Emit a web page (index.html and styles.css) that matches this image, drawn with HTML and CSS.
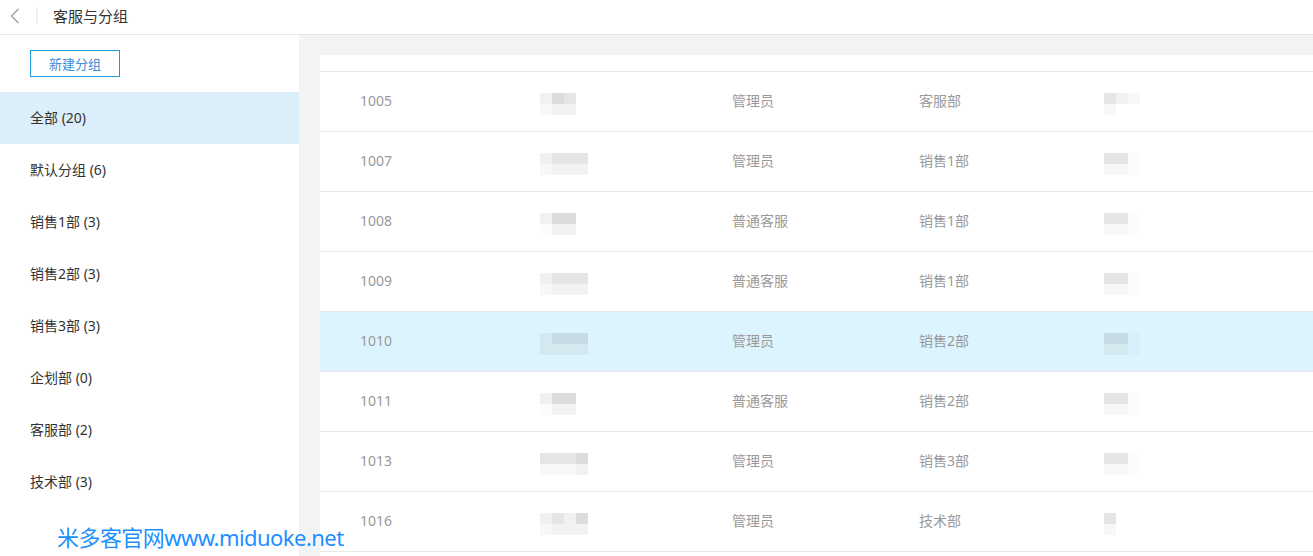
FILE: index.html
```html
<!DOCTYPE html>
<html lang="zh-CN">
  <head>
    <meta charset="UTF-8" />
    <meta name="viewport" content="width=device-width, initial-scale=1.0" />
    <title>客服与分组</title>
    <link rel="stylesheet" href="styles.css">
  </head>
  <body>
    <div class="header">
      <span class="backBtn">
        <svg width="10" height="16" viewBox="0 0 10 16"><path d="M8.5 1 L1.5 8 L8.5 15" fill="none" stroke="#9a9a9a" stroke-width="1.2"/></svg>
      </span>
      <span class="divider"></span>
      <span class="title">客服与分组</span>
    </div>

    <div class="main">
      <div class="sidebar">
        <div class="btnWrap">
          <button class="newBtn">新建分组</button>
        </div>
        <ul class="groupList">
          <li class="active">全部 (20)</li>
          <li>默认分组 (6)</li>
          <li>销售1部 (3)</li>
          <li>销售2部 (3)</li>
          <li>销售3部 (3)</li>
          <li>企划部 (0)</li>
          <li>客服部 (2)</li>
          <li>技术部 (3)</li>
        </ul>
      </div>

      <div class="content">
        <div class="panel">
          <div class="topStrip"></div>

          <div class="row">
            <span>1005</span>
            <span class="blur"><i class="a"></i><i class="c"></i><i class="b"></i><i class="e"></i><i class="d"></i><i class="d"></i></span>
            <span>管理员</span>
            <span>客服部</span>
            <span class="blur small"><i class="b"></i><i class="a"></i><i class="e"></i><i class="e"></i></span>
          </div>
          <div class="row">
            <span>1007</span>
            <span class="blur"><i class="a"></i><i class="b"></i><i class="b"></i><i class="b"></i><i class="e"></i><i class="d"></i><i class="d"></i><i class="d"></i></span>
            <span>管理员</span>
            <span>销售1部</span>
            <span class="blur small"><i class="b"></i><i class="b"></i><i class="f"></i><i class="e"></i><i class="e"></i><i class="f"></i></span>
          </div>
          <div class="row">
            <span>1008</span>
            <span class="blur"><i class="a"></i><i class="c"></i><i class="c"></i><i class="f"></i><i class="d"></i><i class="d"></i></span>
            <span>普通客服</span>
            <span>销售1部</span>
            <span class="blur small"><i class="b"></i><i class="b"></i><i class="f"></i><i class="e"></i><i class="e"></i><i class="f"></i></span>
          </div>
          <div class="row">
            <span>1009</span>
            <span class="blur"><i class="a"></i><i class="b"></i><i class="b"></i><i class="b"></i><i class="e"></i><i class="d"></i><i class="d"></i><i class="d"></i></span>
            <span>普通客服</span>
            <span>销售1部</span>
            <span class="blur small"><i class="b"></i><i class="b"></i><i class="f"></i><i class="e"></i><i class="e"></i><i class="f"></i></span>
          </div>
          <div class="row selected">
            <span>1010</span>
            <span class="blur"><i class="h1"></i><i class="h2"></i><i class="h2"></i><i class="h2"></i><i class="h3"></i><i class="h3"></i><i class="h3"></i><i class="h3"></i></span>
            <span>管理员</span>
            <span>销售2部</span>
            <span class="blur small"><i class="h2"></i><i class="h2"></i><i class="h4"></i><i class="h3"></i><i class="h3"></i><i class="h4"></i></span>
          </div>
          <div class="row">
            <span>1011</span>
            <span class="blur"><i class="a"></i><i class="c"></i><i class="c"></i><i class="f"></i><i class="d"></i><i class="d"></i></span>
            <span>普通客服</span>
            <span>销售2部</span>
            <span class="blur small"><i class="b"></i><i class="b"></i><i class="f"></i><i class="e"></i><i class="e"></i><i class="f"></i></span>
          </div>
          <div class="row">
            <span>1013</span>
            <span class="blur"><i class="b"></i><i class="b"></i><i class="b"></i><i class="c"></i><i class="e"></i><i class="e"></i><i class="e"></i><i class="d"></i></span>
            <span>管理员</span>
            <span>销售3部</span>
            <span class="blur small"><i class="b"></i><i class="b"></i><i class="f"></i><i class="e"></i><i class="e"></i><i class="f"></i></span>
          </div>
          <div class="row">
            <span>1016</span>
            <span class="blur"><i class="a"></i><i class="b"></i><i class="a"></i><i class="c"></i><i class="e"></i><i class="d"></i><i class="d"></i><i class="d"></i></span>
            <span>管理员</span>
            <span>技术部</span>
            <span class="blur tiny"><i class="b"></i><i class="e"></i></span>
          </div>
        </div>
      </div>
    </div>

    <div class="watermark">米多客官网www.miduoke.net</div>
  </body>
</html>
```

FILE: styles.css
```css
* {
  box-sizing: border-box;
}

body {
  margin: 0;
  height: 556px;
  overflow: hidden;
  font-family: "Noto Sans", "Noto Sans CJK SC", sans-serif;
  color: #333;
  background: #f2f3f5;
  position: relative;
}

.header {
  height: 35px;
  background: #fff;
  border-bottom: 1px solid #e6e6e6;
  display: flex;
  align-items: center;
  padding-bottom: 3px;
}

.backBtn {
  width: 34px;
  display: flex;
  justify-content: center;
  padding-right: 4px;
}

.divider {
  width: 2px;
  height: 17px;
  margin-left: 2px;
  background: #f0f0f0;
}

.title {
  margin-left: 15px;
  font-size: 15px;
  color: #333;
}

.main {
  display: flex;
  height: 521px;
}

.sidebar {
  width: 299px;
  background: #fff;
}

.btnWrap {
  padding: 15px 30px 15px;
}

.newBtn {
  width: 90px;
  height: 27px;
  border: 1px solid #1e9bd7;
  background: #fff;
  color: #3a8fd9;
  font-family: inherit;
  font-size: 13px;
  padding: 0;
  cursor: pointer;
}

.groupList {
  list-style: none;
  margin: 0;
  padding: 0;
}

.groupList li {
  height: 52px;
  line-height: 52px;
  padding-left: 30px;
  font-size: 14px;
  color: #333;
}

.groupList li.active {
  background: #dbeef9;
}

.content {
  flex: 1;
  padding: 20px 0 0 21px;
}

.panel {
  background: #fff;
  height: 100%;
}

.topStrip {
  height: 17px;
  border-bottom: 1px solid #e8e8e8;
}

.row {
  display: grid;
  grid-template-columns: 180px 192px 187px 185px 1fr;
  align-items: center;
  height: 60px;
  padding-left: 40px;
  padding-bottom: 3px;
  border-bottom: 1px solid #e8e8e8;
  font-size: 14px;
  color: #999;
}

.row.selected {
  background: #dcf4fe;
}

.blur {
  display: grid;
  grid-template-columns: repeat(4, 12px);
  grid-template-rows: 11px 11px;
  width: 48px;
  margin-top: 7px;
}

.blur:has(i:nth-child(6):last-child) {
  grid-template-columns: repeat(3, 12px);
}

.blur.small {
  grid-template-columns: repeat(3, 12px);
}

.blur.tiny {
  grid-template-columns: 12px;
}

.blur i {
  display: block;
}

.blur .a { background: #f1f1f1; }
.blur .b { background: #e5e5e6; }
.blur .c { background: #dcdcdd; }
.blur .d { background: #f2f2f3; }
.blur .e { background: #f7f7f7; }
.blur .f { background: #fbfcfe; }
.blur .h1 { background: #d3e8f0; }
.blur .h2 { background: #c6dbe3; }
.blur .h3 { background: #d4e8f0; }
.blur .h4 { background: #d6effb; }

.watermark {
  position: absolute;
  left: 57px;
  top: 520px;
  font-family: "Noto Sans", "Noto Sans CJK SC", sans-serif;
  font-size: 22px;
  color: #1e8fff;
  letter-spacing: -0.55px;
}
```
